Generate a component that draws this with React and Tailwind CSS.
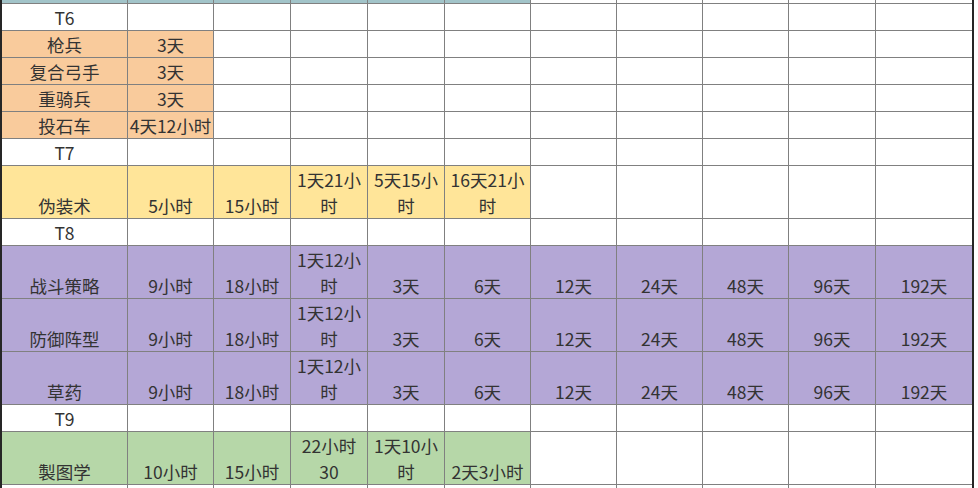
import React from 'react';

const TEAL = 'bg-[#a2c4c9]';
const ORANGE = 'bg-[#f9cb9c]';
const YELLOW = 'bg-[#ffe599]';
const PURPLE = 'bg-[#b4a7d6]';
const GREEN = 'bg-[#b6d7a8]';

// each cell: string, or array of lines when the sheet wraps it
const rows = [
  { h: 'h-[3px]', bg: TEAL, span: 6, cells: [] },
  { h: 'h-[26px]', bg: '', span: 0, cells: ['T6'] },
  { h: 'h-[26px]', bg: ORANGE, span: 2, cells: ['枪兵', '3天'] },
  { h: 'h-[26px]', bg: ORANGE, span: 2, cells: ['复合弓手', '3天'] },
  { h: 'h-[26px]', bg: ORANGE, span: 2, cells: ['重骑兵', '3天'] },
  { h: 'h-[26px]', bg: ORANGE, span: 2, cells: ['投石车', '4天12小时'] },
  { h: 'h-[26px]', bg: '', span: 0, cells: ['T7'] },
  {
    h: 'h-[52px]', bg: YELLOW, span: 6,
    cells: ['伪装术', '5小时', '15小时', ['1天21小', '时'], ['5天15小', '时'], ['16天21小', '时']],
  },
  { h: 'h-[26px]', bg: '', span: 0, cells: ['T8'] },
  {
    h: 'h-[52px]', bg: PURPLE, span: 11,
    cells: ['战斗策略', '9小时', '18小时', ['1天12小', '时'], '3天', '6天', '12天', '24天', '48天', '96天', '192天'],
  },
  {
    h: 'h-[52px]', bg: PURPLE, span: 11,
    cells: ['防御阵型', '9小时', '18小时', ['1天12小', '时'], '3天', '6天', '12天', '24天', '48天', '96天', '192天'],
  },
  {
    h: 'h-[52px]', bg: PURPLE, span: 11,
    cells: ['草药', '9小时', '18小时', ['1天12小', '时'], '3天', '6天', '12天', '24天', '48天', '96天', '192天'],
  },
  { h: 'h-[26px]', bg: '', span: 0, cells: ['T9'] },
  {
    h: 'h-[52px]', bg: GREEN, span: 6,
    cells: ['製图学', '10小时', '15小时', ['22小时', '30'], ['1天10小', '时'], '2天3小时'],
  },
  { h: 'h-[26px]', bg: '', span: 0, cells: [] },
];

function Cell({ value, bg, h }) {
  const lines = Array.isArray(value) ? value : value ? [value] : [];
  return (
    <div className={`${h} ${bg || 'bg-white'} flex flex-col justify-end items-center overflow-hidden whitespace-nowrap leading-[26px]`}>
      {lines.map((l, i) => (
        <span key={i} className="block translate-y-[1px]">{l}</span>
      ))}
    </div>
  );
}

export default function App() {
  return (
    <div
      className="w-[978px] h-[488px] overflow-hidden bg-white text-[#333] text-[17.5px]"
      style={{ fontFamily: '"Noto Sans CJK SC", "Noto Sans", sans-serif' }}
    >
      <div className="w-[974px] border-l-2 border-r-2 border-[#262626] bg-[#808080]">
        <div className="grid grid-cols-[125px_85px_76px_76px_76px_85px_85px_85px_85px_86px_96px] gap-px">
          {rows.map((row, r) =>
            Array.from({ length: 11 }).map((_, c) => (
              <Cell
                key={`${r}-${c}`}
                h={row.h}
                bg={c < row.span ? row.bg : ''}
                value={row.cells[c]}
              />
            ))
          )}
        </div>
      </div>
    </div>
  );
}
